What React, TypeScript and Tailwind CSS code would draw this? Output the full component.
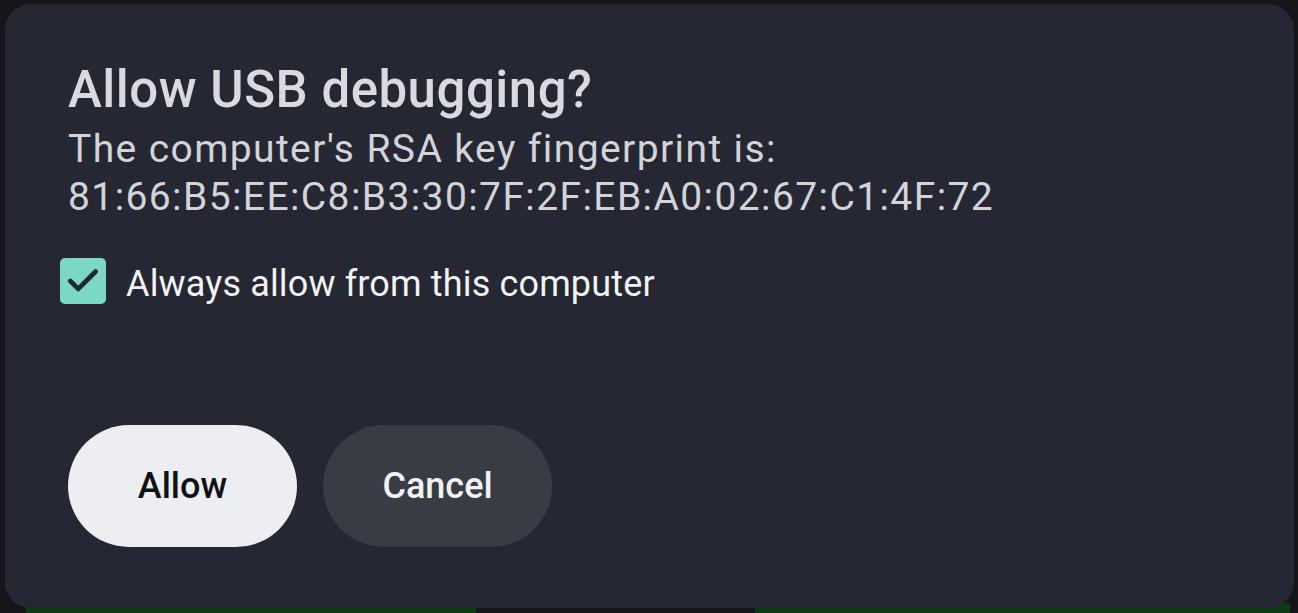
import { Check } from 'lucide-react'

export default function App() {
  return (
    <div className="relative h-[613px] w-[1298px] overflow-hidden bg-[#15151a] font-['Roboto',sans-serif]">
      {/* Background strip peeking out under the dialog */}
      <div className="absolute bottom-0 left-[26px] h-[10px] w-[450px] bg-[#0d3a14]" />
      <div className="absolute bottom-0 left-[755px] h-[10px] w-[535px] bg-[#0d3a14]" />

      {/* Dialog */}
      <div className="relative ml-[5px] mt-[4px] h-[604px] w-[1289px] rounded-[26px] bg-[#252833] pl-[63px] pt-[56px]">
        <h1 className="text-[51px] font-medium leading-[60px] tracking-[0.5px] text-[#d9dadf]">Allow USB debugging?</h1>
        <p className="mt-[5px] text-[39px] leading-[48px] tracking-[1.4px] text-[#d3d4d9]">
          The computer's RSA key fingerprint is:
          <br />
          81:66:B5:EE:C8:B3:30:7F:2F:EB:A0:02:67:C1:4F:72
        </p>

        <label className="mt-[37px] -ml-[8px] flex h-[46px] items-center gap-[20px]">
          <span className="flex h-[46px] w-[46px] items-center justify-center rounded-[5px] bg-[#7cd8c6]">
            <Check className="h-[38px] w-[38px] text-[#1d2a2c]" strokeWidth={3} />
          </span>
          <span className="translate-y-[3px] text-[36px] leading-[46px] tracking-[0.15px] text-[#f1f2f4]">Always allow from this computer</span>
        </label>

        <div className="mt-[121px] flex gap-[26px]">
          <button className="h-[122px] w-[229px] rounded-full bg-[#eceef2] text-[36px] font-medium text-[#111214]">
            Allow
          </button>
          <button className="h-[122px] w-[229px] rounded-full bg-[#393c44] text-[36px] font-medium text-[#f1f2f4]">
            Cancel
          </button>
        </div>
      </div>
    </div>
  )
}
